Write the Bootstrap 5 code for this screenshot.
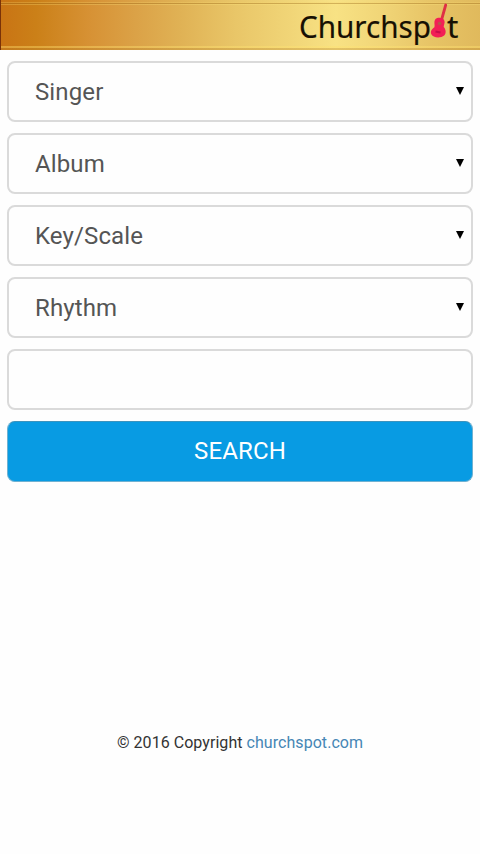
<!DOCTYPE html>
<html lang="en">
<head>
<meta charset="utf-8">
<meta name="viewport" content="width=device-width, initial-scale=1">
<title>Churchspot</title>
<link href="https://cdn.jsdelivr.net/npm/bootstrap@5.3.0/dist/css/bootstrap.min.css" rel="stylesheet">
<style>
body { font-family: Roboto, sans-serif; background: #fefefe; }
.brand-bar {
  height: 50px;
  border-left: 1px solid #7a3208;
  background:
    linear-gradient(180deg, transparent 0 2px, #f8d66e44 2px 3px, #9a6a1866 3px 4px, #ffe88044 4px 5px, transparent 5px 46px, #ffe27066 46px 48px, #b9852c55 48px 50px),
    linear-gradient(90deg, #c97414 0, #cb8018 35px, #d79235 90px, #dba247 135px, #e0b255 180px, #e9c668 235px, #f0d476 285px, #f8e284 335px, #f0d476 385px, #e7c466 430px, #e0b95c 480px);
}
.search-form { gap: 11px; padding: 11px 7px 0; }
.field {
  height: 61px;
  border: 2px solid #dadada;
  border-radius: 8px;
  padding: 0 26px;
  font-size: 24px;
  color: #555;
  background: #fefefe none;
}
select.field { padding-top: 1px; letter-spacing: .12px; }
.arrow { right: 8px; top: 25px; pointer-events: none; }
.btn-search {
  height: 61px;
  border: 1px solid #6fb1d1;
  border-top-color: #3d93bd;
  border-radius: 8px;
  background: #089be3;
  color: #fff;
  font-size: 24px;
  letter-spacing: .15px;
  padding: 0 0 1px;
}
.copyright { margin-top: 249px; font-size: 16px; line-height: 24px; letter-spacing: .05px; color: #333; }
.copyright a { color: #4686b5; }
</style>
</head>
<body>
<header class="brand-bar d-flex justify-content-end">
  <svg width="182" height="50" viewBox="298 0 182 50" role="img" aria-label="Churchspot">
    <g font-family="'Noto Sans', sans-serif" font-size="31.500" fill="#171003" stroke="#171003" stroke-width=".2">
      <text x="299" y="38.300" textLength="132" lengthAdjust="spacingAndGlyphs">Churchsp</text>
      <text x="447" y="38.300">t</text>
    </g>
    <path d="M441.500 20 445.700 5" stroke="#de3145" stroke-width="2.800" stroke-linecap="round"/>
    <path d="M435.500 19c2-2 8-2 9 2 .6 2-.8 4-.8 6 2 2 3 6 .5 8.500-3.500 3-11.500 2.500-13-1.500-1-3 .8-5 3-6.500 1.300-2-1-5.500 1.300-8.500Z" fill="#f21e56"/>
    <circle cx="439.500" cy="23.500" r="1.800" fill="#bd5148"/>
    <path d="m435.500 31.500 5 1" stroke="#c90d49" stroke-width="2"/>
  </svg>
</header>
<main>
  <form class="search-form d-flex flex-column">
    <div class="position-relative">
      <select class="form-select field" aria-label="Singer"><option>Singer</option></select>
      <svg class="arrow position-absolute" width="10" height="9"><path d="M1 1h8L5 9Z"/></svg>
    </div>
    <div class="position-relative">
      <select class="form-select field" aria-label="Album"><option>Album</option></select>
      <svg class="arrow position-absolute" width="10" height="9"><path d="M1 1h8L5 9Z"/></svg>
    </div>
    <div class="position-relative">
      <select class="form-select field" aria-label="Key/Scale"><option>Key/Scale</option></select>
      <svg class="arrow position-absolute" width="10" height="9"><path d="M1 1h8L5 9Z"/></svg>
    </div>
    <div class="position-relative">
      <select class="form-select field" aria-label="Rhythm"><option>Rhythm</option></select>
      <svg class="arrow position-absolute" width="10" height="9"><path d="M1 1h8L5 9Z"/></svg>
    </div>
    <input type="text" class="form-control field" aria-label="Keyword">
    <button type="button" class="btn btn-search w-100">SEARCH</button>
  </form>
</main>
<footer class="copyright text-center">© 2016 Copyright <a class="text-decoration-none" href="#">churchspot.com</a></footer>
<script src="https://cdn.jsdelivr.net/npm/bootstrap@5.3.0/dist/js/bootstrap.bundle.min.js"></script>
</body>
</html>
